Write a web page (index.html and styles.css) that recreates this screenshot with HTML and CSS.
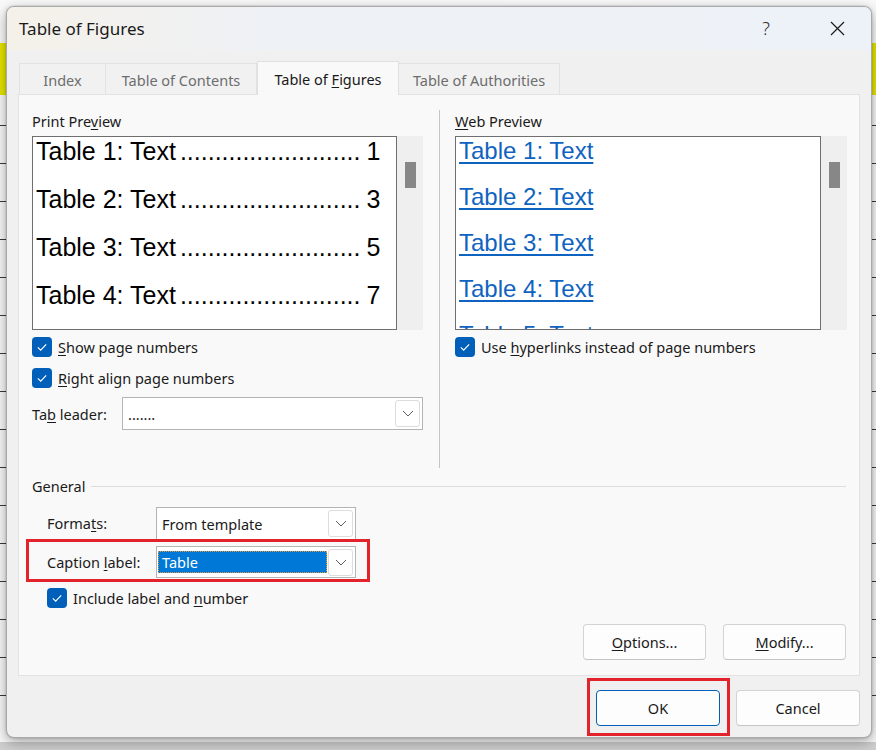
FILE: index.html
```html
<!DOCTYPE html>
<html>
<head>
<meta charset="utf-8">
<title>Table of Figures</title>
<link rel="stylesheet" href="styles.css">
</head>
<body>
<div class="dialog">
  <div class="titlebar">
    <span class="title">Table of Figures</span>
    <span class="help">?</span>
    <span class="close"><svg width="15" height="15" viewBox="0 0 15 15"><path d="M1 1L14 14M14 1L1 14" stroke="#1a1a1a" stroke-width="1.2" fill="none"/></svg></span>
  </div>
  <div class="content">
    <div class="tabs">
      <div class="tab t-index"><span>Index</span></div>
      <div class="tab t-toc"><span>Table of Contents</span></div>
      <div class="tab t-tof active"><span>Table of <u>F</u>igures</span></div>
      <div class="tab t-toa"><span>Table of Authorities</span></div>
    </div>
    <div class="panel">
      <div class="top">
        <div class="col">
          <div class="label">Print Pre<u>v</u>iew</div>
          <div class="preview-row">
            <div class="preview">
              <div class="pline"><span>Table 1: Text</span><span class="dots">..........................</span><span class="num">1</span></div>
              <div class="pline"><span>Table 2: Text</span><span class="dots">..........................</span><span class="num">3</span></div>
              <div class="pline"><span>Table 3: Text</span><span class="dots">..........................</span><span class="num">5</span></div>
              <div class="pline"><span>Table 4: Text</span><span class="dots">..........................</span><span class="num">7</span></div>
            </div>
            <div class="track"><div class="thumb"></div></div>
          </div>
          <div class="check-row">
            <span class="cb"><svg width="20" height="20" viewBox="0 0 20 20"><path d="M5.8 10.4L8.7 13.1L14.2 7.4" stroke="#fff" stroke-width="1.2" fill="none"/></svg></span>
            <span><u>S</u>how page numbers</span>
          </div>
          <div class="check-row">
            <span class="cb"><svg width="20" height="20" viewBox="0 0 20 20"><path d="M5.8 10.4L8.7 13.1L14.2 7.4" stroke="#fff" stroke-width="1.2" fill="none"/></svg></span>
            <span><u>R</u>ight align page numbers</span>
          </div>
          <div class="leader-row">
            <span class="leader-label">Ta<u>b</u> leader:</span>
            <div class="combo leader-combo">
              <span class="value">.......</span>
              <span class="dd"><svg width="12" height="7" viewBox="0 0 12 7"><path d="M1 1L6 6L11 1" stroke="#5f5f5f" stroke-width="1" fill="none"/></svg></span>
            </div>
          </div>
        </div>
        <div class="vsep"></div>
        <div class="col">
          <div class="label"><u>W</u>eb Preview</div>
          <div class="preview-row web">
            <div class="preview">
              <div class="wline"><span>Table 1: Text</span></div>
              <div class="wline"><span>Table 2: Text</span></div>
              <div class="wline"><span>Table 3: Text</span></div>
              <div class="wline"><span>Table 4: Text</span></div>
              <div class="wline"><span>Table 5: Text</span></div>
            </div>
            <div class="track"><div class="thumb"></div></div>
          </div>
          <div class="check-row">
            <span class="cb"><svg width="20" height="20" viewBox="0 0 20 20"><path d="M5.8 10.4L8.7 13.1L14.2 7.4" stroke="#fff" stroke-width="1.2" fill="none"/></svg></span>
            <span>Use <u>h</u>yperlinks instead of page numbers</span>
          </div>
        </div>
      </div>

      <div class="general-head"><span>General</span><span class="rule"></span></div>
      <div class="field-row">
        <span class="field-label">Forma<u>t</u>s:</span>
        <div class="combo field-combo">
          <span class="value">From template</span>
          <span class="dd"><svg width="12" height="7" viewBox="0 0 12 7"><path d="M1 1L6 6L11 1" stroke="#5f5f5f" stroke-width="1" fill="none"/></svg></span>
        </div>
      </div>
      <div class="caption-box">
        <span class="field-label">Caption <u>l</u>abel:</span>
        <div class="combo field-combo caption-combo">
          <span class="sel">Table</span>
          <span class="dd"><svg width="12" height="7" viewBox="0 0 12 7"><path d="M1 1L6 6L11 1" stroke="#5f5f5f" stroke-width="1" fill="none"/></svg></span>
        </div>
      </div>
      <div class="check-row include">
        <span class="cb"><svg width="20" height="20" viewBox="0 0 20 20"><path d="M5.8 10.4L8.7 13.1L14.2 7.4" stroke="#fff" stroke-width="1.2" fill="none"/></svg></span>
        <span>Include label and <u>n</u>umber</span>
      </div>

      <div class="pbtns">
        <div class="btn pbtn"><span><u>O</u>ptions...</span></div>
        <div class="btn pbtn"><span><u>M</u>odify...</span></div>
      </div>
    </div>
    <div class="footer">
      <div class="ok-mark"><div class="btn fbtn ok">OK</div></div>
      <div class="btn fbtn cancel">Cancel</div>
    </div>
  </div>
</div>
</body>
</html>
```

FILE: styles.css
```css
* { box-sizing: border-box; }

html, body { margin: 0; }

body {
  width: 876px;
  height: 750px;
  overflow: hidden;
  padding: 6px 0 0 6px;
  font-family: "Noto Sans", "Open Sans", sans-serif;
  font-size: 14.5px;
  color: #1b1b1b;
  background:
    linear-gradient(#e6e600, #e6e600) 0 43px / 100% 52px no-repeat,
    repeating-linear-gradient(180deg, transparent 0 37px, #3a3a3a 37px 38px) 0 88px / 100% 640px no-repeat,
    linear-gradient(#fafafa, #fafafa) 0 0 / 100% 742px no-repeat,
    #cfcfcf;
}

u { text-decoration: underline; text-underline-offset: 2px; text-decoration-thickness: 1px; }

.dialog {
  width: 866px;
  height: 732px;
  border: 1px solid #a9a9a9;
  border-radius: 8px;
  background: #f0f0f0;
  box-shadow: 0 4px 14px rgba(0, 0, 0, 0.35), 0 0 2px rgba(0, 0, 0, 0.25);
  display: flex;
  flex-direction: column;
  overflow: hidden;
}

/* Title bar */
.titlebar {
  height: 43px;
  flex: none;
  display: flex;
  align-items: center;
  padding-left: 12px;
  background: linear-gradient(90deg, #f5f1e9 0%, #eef1f5 30%, #edf2f8 100%);
}
.title { flex: 1; font-size: 17px; color: #1a1a1a; padding-bottom: 1px; }
.help {
  width: 24px;
  text-align: center;
  font-size: 18px;
  color: #2b2b2b;
  font-weight: 300;
  margin-right: 52px;
  padding-bottom: 2px;
}
.close { width: 15px; height: 15px; margin-right: 26px; display: flex; }

/* Content */
.content { flex: 1; padding: 11px 11px 0 11px; display: flex; flex-direction: column; }

.tabs {
  display: flex;
  height: 34px;
  padding-left: 1px;
  margin-bottom: -1px;
  position: relative;
  z-index: 1;
}
.tab {
  height: 31px;
  margin-top: 2px;
  display: flex;
  align-items: center;
  justify-content: center;
  padding-top: 2px;
  font-size: 14.5px;
  color: #6d6d6d;
  background: #f1f1f1;
  border: 1px solid #e2e2e2;
  border-bottom: none;
  white-space: nowrap;
}
.tab + .tab { border-left: none; }
.t-index { width: 87px; }
.t-toc { width: 151px; }
.t-tof { width: 142px; }
.t-toa { width: 161px; border-left: none; }
.tab.active {
  height: 34px;
  margin-top: 0;
  padding-top: 0;
  color: #1a1a1a;
  background: #f9f9f9;
  border: 1px solid #e0e0e0;
  border-bottom: none;
}

.panel {
  height: 582px;
  flex: none;
  border: 1px solid #e2e2e2;
  background: #f9f9f9;
  padding: 16px 12px 15px 13px;
  display: flex;
  flex-direction: column;
}

.top {
  display: grid;
  grid-template-columns: 391px 1fr 392px;
  height: 357px;
}
.vsep { width: 1px; background: #c4c4c4; justify-self: center; margin-top: -1px; }

.label { height: 20px; line-height: 20px; color: #1a1a1a; }

.preview-row { display: flex; margin-top: 5px; height: 194px; }
.preview {
  width: 365px;
  height: 194px;
  border: 1px solid #6f6f6f;
  background: #fff;
  overflow: hidden;
  padding-left: 3px;
}
.web .preview { width: 366px; }
.track { width: 26px; background: #efefef; padding: 26px 0 0 8px; }
.thumb { width: 11px; height: 26px; background: #878787; }

.pline {
  display: flex;
  font-family: "Liberation Sans", Arial, sans-serif;
  font-size: 25px;
  line-height: 28px;
  height: 28px;
  margin-bottom: 20px;
  white-space: nowrap;
  color: #000;
}
.pline .dots { margin-left: 4px; flex: none; }
.pline .num { margin-left: 6px; }

.wline {
  font-family: "Liberation Sans", Arial, sans-serif;
  font-size: 24px;
  line-height: 28px;
  height: 28px;
  margin-bottom: 18px;
  white-space: nowrap;
  color: #0f63c0;
}
.wline span {
  text-decoration: underline;
  text-decoration-thickness: 2px;
  text-underline-offset: 3px;
}

.check-row {
  display: flex;
  align-items: center;
  gap: 6px;
  height: 20px;
  margin-top: 7px;
  color: #1a1a1a;
}
.check-row + .check-row { margin-top: 11px; }
.cb {
  width: 20px;
  height: 20px;
  flex: none;
  border-radius: 4px;
  background: #005fb8;
  display: flex;
}

.leader-row { display: flex; align-items: center; margin-top: 9px; height: 33px; }
.leader-label { width: 90px; }

.combo {
  display: flex;
  align-items: center;
  background: #fff;
  border: 1px solid #b4b4b4;
  height: 33px;
  padding: 0 2px 0 5px;
}
.combo .value { flex: 1; white-space: nowrap; }
.leader-combo { width: 301px; }
.dd {
  width: 25px;
  height: 27px;
  flex: none;
  border: 1px solid #dcdcdc;
  border-radius: 3px;
  background: #fff;
  display: flex;
  align-items: center;
  justify-content: center;
}

/* General */
.general-head { display: flex; align-items: center; height: 20px; margin-top: 8px; }
.rule { flex: 1; height: 1px; background: #dcdcdc; margin: 0 1px 0 6px; }

.field-row { display: flex; align-items: center; height: 33px; margin-top: 11px; padding-left: 15px; }
.field-label { width: 109px; line-height: 33px; }
.field-combo { width: 200px; padding-left: 5px; }

.caption-box {
  display: flex;
  align-items: flex-start;
  width: 344px;
  height: 43px;
  margin: -1px 0 0 -6px;
  border: 3px solid #e2232b;
  padding: 4px 11px 0 18px;
}
.caption-combo { height: 32px; padding-left: 1px; }
.sel {
  flex: 1;
  height: 22px;
  line-height: 20px;
  background: #0078d7;
  color: #fff;
  padding-left: 3px;
  border: 1px dotted #e59a3c;
  margin-right: 1px;
}

.include { margin-top: 6px; padding-left: 15px; }

.btn {
  display: flex;
  align-items: center;
  justify-content: center;
  height: 36px;
  border: 1px solid #d3d3d3;
  border-bottom-color: #c4c4c4;
  border-radius: 4px;
  background: #fdfdfd;
  font-size: 14.5px;
  color: #1a1a1a;
}
.pbtns { margin-top: auto; display: flex; justify-content: flex-end; gap: 17px; padding-right: 1px; }
.pbtn { width: 123px; }

.footer { display: flex; justify-content: flex-end; align-items: flex-start; gap: 6px; padding: 2px 0 0 0; }
.ok-mark { border: 3px solid #e2232b; padding: 9px 7px 7px 6px; }
.fbtn { width: 124px; }
.ok { border-color: #005fb8; }
.cancel { margin-top: 12px; }
```
